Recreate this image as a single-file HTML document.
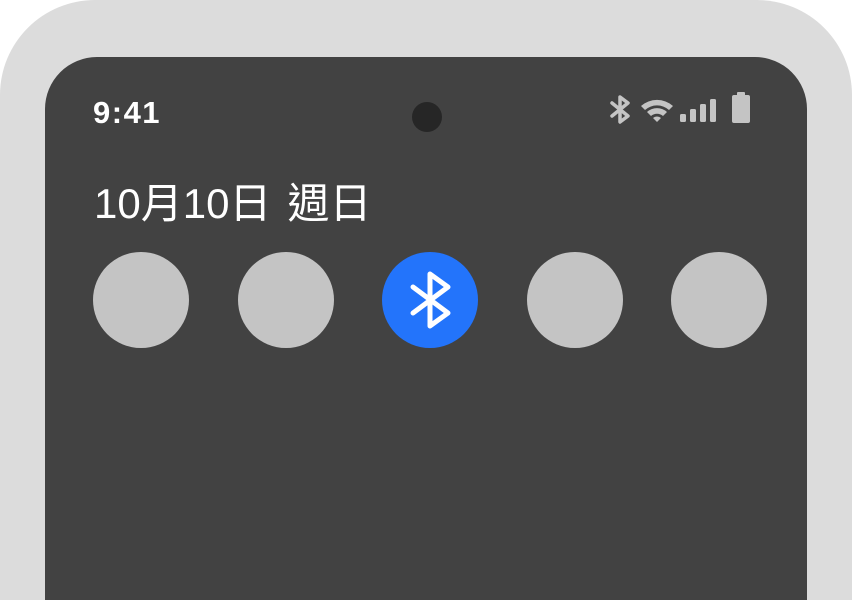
<!DOCTYPE html>
<html><head><meta charset="utf-8"><style>
html,body{margin:0;padding:0;width:852px;height:600px;overflow:hidden;background:#fff;position:relative}
.outer{position:absolute;left:0;top:0;width:852px;height:600px;background:#dcdcdc;border-radius:95px 95px 0 0}
.inner{position:absolute;left:45px;top:57px;width:762px;height:543px;background:#424242;border-radius:52px 52px 0 0}
.time{position:absolute;left:93px;top:95px;font:bold 31px "Liberation Sans",sans-serif;color:#fff;letter-spacing:1.5px;line-height:36px}
.cam{position:absolute;left:412px;top:102px;width:30px;height:30px;border-radius:50%;background:#262626}
.date{position:absolute;left:94px;top:176px;font:42px "Liberation Sans","Noto Sans CJK TC",sans-serif;color:#fff;line-height:56px;white-space:nowrap}
.c{position:absolute;top:252px;width:96px;height:96px;border-radius:50%;background:#c4c4c4}
</style></head><body>
<div class="outer"></div>
<div class="inner"></div>
<div class="time">9:41</div>
<div class="cam"></div>
<svg style="position:absolute;left:0;top:0" width="852" height="600">
<g fill="none" stroke="#c4c4c4" stroke-width="3.5" stroke-linecap="round" stroke-linejoin="round">
<path d="M612 103 L628 116 L620 122 L620 97 L628 103 L612 116"/>
</g>
<path d="M641 106 A24 24 0 0 1 673 106 L669 110 A18 18 0 0 0 645 110Z" fill="#c4c4c4"/>
<path d="M647 112 A15 15 0 0 1 667 112 L663 116 A9 9 0 0 0 651 116Z" fill="#c4c4c4"/>
<path d="M653 118 A6 6 0 0 1 661 118 L657 122Z" fill="#c4c4c4"/>
<rect x="680" y="114" width="6" height="8" rx="1.5" fill="#c4c4c4"/>
<rect x="690" y="109" width="6" height="13" rx="1.5" fill="#c4c4c4"/>
<rect x="700" y="104" width="6" height="18" rx="1.5" fill="#c4c4c4"/>
<rect x="710" y="99" width="6" height="23" rx="1.5" fill="#c4c4c4"/>
<rect x="737" y="92" width="8" height="4" rx="1" fill="#c4c4c4"/>
<rect x="732" y="95" width="18" height="28" rx="2" fill="#c4c4c4"/>
</svg>
<div class="date">10月10日<span style="display:inline-block;width:16px"></span>週日</div>
<div class="c" style="left:93px"></div>
<div class="c" style="left:238px"></div>
<div class="c" style="left:382px;background:#2374fb"></div>
<div class="c" style="left:527px"></div>
<div class="c" style="left:671px"></div>
<svg style="position:absolute;left:0;top:0" width="852" height="600">
<path d="M413 287 L448 313 L430 326 L430 274 L448 287 L413 313" fill="none" stroke="#fff" stroke-width="5" stroke-linecap="round" stroke-linejoin="round"/>
</svg>
</body></html>
